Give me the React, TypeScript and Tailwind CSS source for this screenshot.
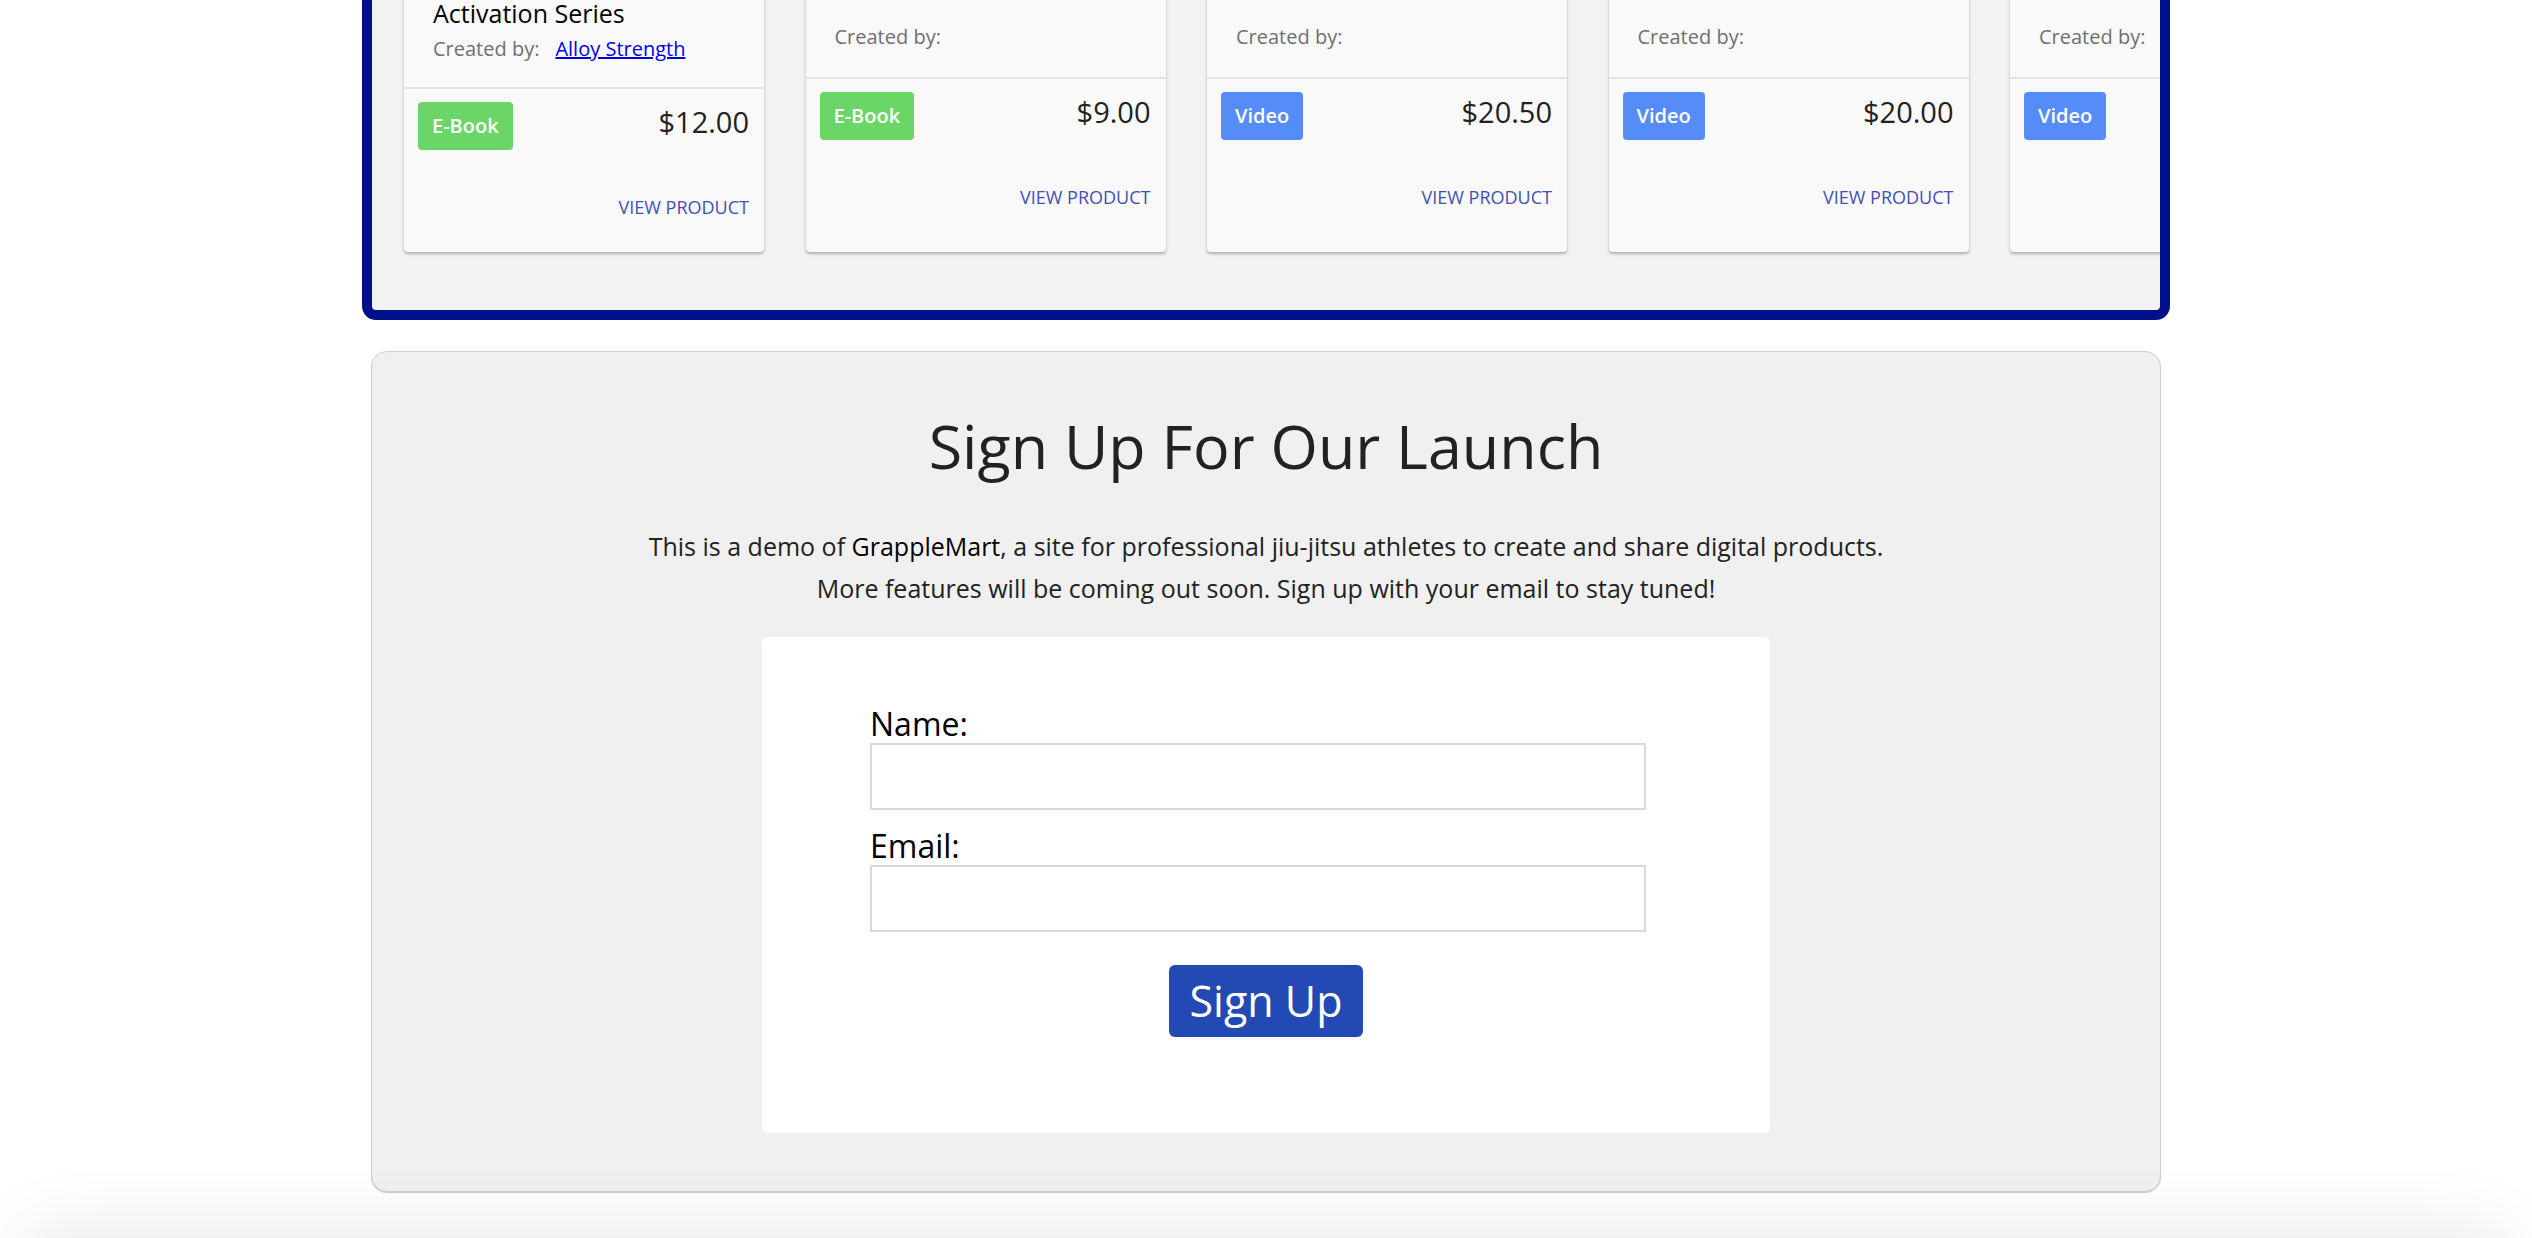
import React from 'react'

interface Product {
  titleLines: string[]
  author?: string
  type: 'E-Book' | 'Video'
  price: string
  tall?: boolean
}

const products: Product[] = [
  { titleLines: ['Glute & Hip', 'Activation Series'], author: 'Alloy Strength', type: 'E-Book', price: '$12.00', tall: true },
  { titleLines: ['Mobility Guide'], type: 'E-Book', price: '$9.00' },
  { titleLines: ['Leg Lock Entries'], type: 'Video', price: '$20.50' },
  { titleLines: ['Guard Passing 101'], type: 'Video', price: '$20.00' },
  { titleLines: ['Back Takes'], type: 'Video', price: '$18.00' },
]

const ProductCard: React.FC<{ product: Product }> = ({ product }) => {
  const isBook = product.type === 'E-Book'

  return (
    <div className="flex w-[360px] shrink-0 flex-col rounded-[4px] bg-[#f9f9f9] shadow-[0_2px_3px_rgba(0,0,0,0.28)]">
      <div
        className={`flex flex-col justify-end px-[29px] ${
          product.tall ? 'h-[300px] pb-[25px]' : 'h-[290px] pb-[27px]'
        }`}
      >
        <h3
          className={`text-[25px] leading-[34px] font-normal text-black ${
            product.tall ? 'mb-[6px]' : 'mb-[48px]'
          }`}
        >
          {product.titleLines.map((line) => (
            <div key={line}>{line}</div>
          ))}
        </h3>
        <div className="flex items-center text-[20px] leading-[26px]">
          <span className="text-[#707070]">Created by:</span>
          {product.author && (
            <a href="#" className="ml-[16px] text-[#0000ee] underline">
              {product.author}
            </a>
          )}
        </div>
      </div>
      <div className="border-t-2 border-[#e3e3e3] pt-[13px] pr-[15px] pb-[32px] pl-[14px]">
        <div className="flex items-start justify-between">
          <span
            className={`flex h-[48px] items-center rounded-[4px] px-[14px] text-[20px] font-semibold text-white ${
              isBook ? 'bg-[#6cd567]' : 'bg-[#568cf8]'
            }`}
          >
            {product.type}
          </span>
          <span className="text-[29px] leading-[40px] text-[#222]">{product.price}</span>
        </div>
        <div className="mt-[45px] text-right text-[18px] leading-[25px] text-[#3f51b5] uppercase">
          View Product
        </div>
      </div>
    </div>
  )
}

export default function App() {
  return (
    <div
      className="flex flex-col items-center bg-white"
      style={{ fontFamily: '"Open Sans", "Liberation Sans", sans-serif' }}
    >
      <div className="-mt-[255px] w-[1808px] overflow-hidden rounded-[14px] border-[10px] border-[#020f8a] bg-[#f2f2f2] pt-[32px] pb-[58px] pl-[32px]">
        <div className="flex gap-[41.5px]">
          {products.map((p) => (
            <ProductCard key={p.titleLines.join(' ')} product={p} />
          ))}
        </div>
      </div>

      <section className="mt-[31px] flex w-[1790px] flex-col items-center rounded-[16px] border border-[#cfcfcf] bg-[#f0f0f0] pt-[58px] pb-[58px] shadow-[0_1px_1px_rgba(0,0,0,0.2)]">
        <h2 className="text-[61px] leading-[72px] font-normal text-[#222]">Sign Up For Our Launch</h2>
        <p className="mt-[43px] text-center text-[25px] leading-[42px] text-[#222]">
          This is a demo of <span className="font-medium text-black">GrappleMart</span>, a site for
          professional jiu-jitsu athletes to create and share digital products.
          <br />
          More features will be coming out soon. Sign up with your email to stay tuned!
        </p>

        <form
          className="mt-[28px] flex w-[1008px] flex-col rounded-[6px] bg-white px-[108px] pt-[71px] pb-[96px]"
          onSubmit={(e) => e.preventDefault()}
        >
          <label className="mb-[3px] block text-[32px] leading-[32px] text-black">Name:</label>
          <input type="text" className="h-[67px] w-[776px] border-2 border-[#d9d9d9] bg-white" />
          <label className="mt-[20px] mb-[3px] block text-[32px] leading-[32px] text-black">Email:</label>
          <input type="email" className="h-[67px] w-[776px] border-2 border-[#d9d9d9] bg-white" />
          <div className="mt-[33px] flex justify-center">
            <button
              type="submit"
              className="flex h-[72px] items-center rounded-[6px] bg-[#2349b4] px-[21px] text-[43px] text-white"
            >
              Sign Up
            </button>
          </div>
        </form>
      </section>

      {/* page body below, only its shadow shows */}
      <div className="mt-[48px] h-[200px] w-[2470px] bg-white shadow-[0_0_80px_rgba(0,0,0,0.12)]" />
    </div>
  )
}
